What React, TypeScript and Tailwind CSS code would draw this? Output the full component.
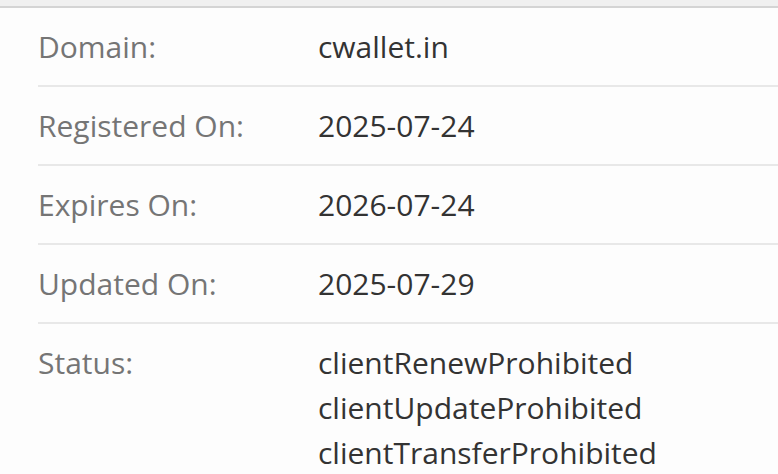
export default function App() {
  const rows: { label: string; values: string[] }[] = [
    { label: 'Domain:', values: ['cwallet.in'] },
    { label: 'Registered On:', values: ['2025-07-24'] },
    { label: 'Expires On:', values: ['2026-07-24'] },
    { label: 'Updated On:', values: ['2025-07-29'] },
    {
      label: 'Status:',
      values: ['clientRenewProhibited', 'clientUpdateProhibited', 'clientTransferProhibited'],
    },
  ];

  return (
    <div className="min-h-screen w-[778px] overflow-hidden bg-[#fdfdfd] font-['Open_Sans',sans-serif]">
      <div className="h-[6px] bg-[#f0f0f0]" />
      <div className="h-[2px] bg-[#d4d4d4]" />
      <div className="ml-[38px] w-[800px]">
        {rows.map((row, i) => (
          <div
            key={row.label}
            className={`flex py-[16px] text-[30px] leading-[45px] ${i < rows.length - 1 ? 'border-b-2 border-[#e8e8e8]' : ''}`}
          >
            <div className="w-[280px] shrink-0 text-[#757575]">{row.label}</div>
            <div className="flex flex-col text-[#333333]">
              {row.values.map((v) => (
                <span key={v}>{v}</span>
              ))}
            </div>
          </div>
        ))}
      </div>
    </div>
  );
}
